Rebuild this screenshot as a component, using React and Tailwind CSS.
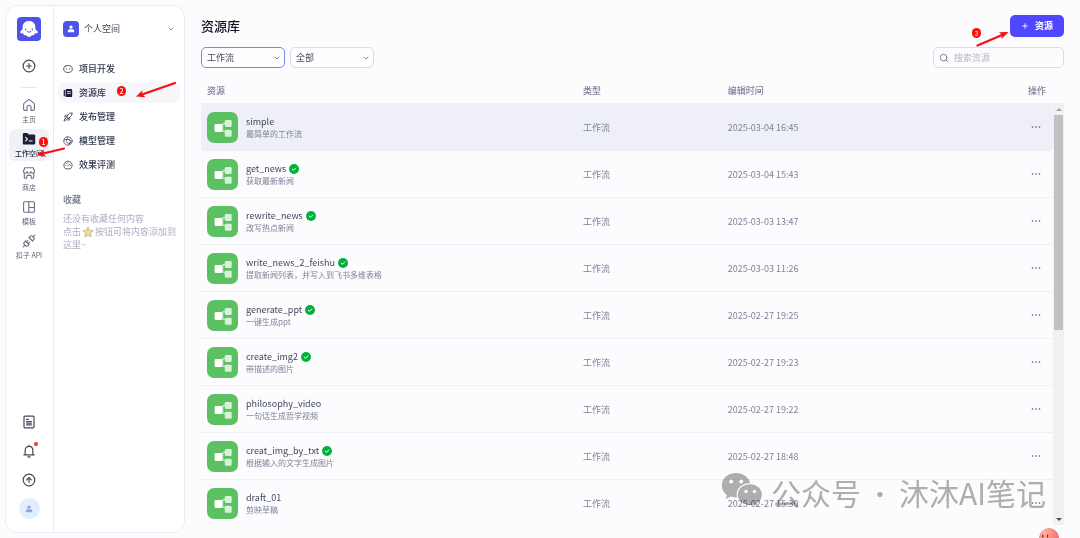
import React, { useState } from 'react';
import { ChevronDown, CirclePlus, CircleArrowUp, Plus, Rocket, Search, Unplug } from 'lucide-react';

const resources = [
  { name: 'simple', desc: '最简单的工作流', time: '2025-03-04 16:45', published: false },
  { name: 'get_news', desc: '获取最新新闻', time: '2025-03-04 15:43', published: true },
  { name: 'rewrite_news', desc: '改写热点新闻', time: '2025-03-03 13:47', published: true },
  { name: 'write_news_2_feishu', desc: '提取新闻列表，并写入到飞书多维表格', time: '2025-03-03 11:26', published: true },
  { name: 'generate_ppt', desc: '一键生成ppt', time: '2025-02-27 19:25', published: true },
  { name: 'create_img2', desc: '带描述的图片', time: '2025-02-27 19:23', published: true },
  { name: 'philosophy_video', desc: '一句话生成哲学视频', time: '2025-02-27 19:22', published: false },
  { name: 'creat_img_by_txt', desc: '根据输入的文字生成图片', time: '2025-02-27 18:48', published: true },
  { name: 'draft_01', desc: '剪映草稿', time: '2025-02-27 15:30', published: false },
];

const railItems = [
  { label: '主页', icon: HomeIcon },
  { label: '工作空间', icon: WorkspaceIcon, active: true },
  { label: '商店', icon: StoreIcon },
  { label: '模板', icon: TemplateIcon },
  { label: '扣子 API', icon: ApiIcon },
];

const menuItems = [
  { label: '项目开发', icon: BotIcon },
  { label: '资源库', icon: LibraryIcon, active: true },
  { label: '发布管理', icon: RocketIcon },
  { label: '模型管理', icon: ModelIcon },
  { label: '效果评测', icon: GaugeIcon },
];

/* ── Icons ── */

function HomeIcon() {
  return (
    <svg viewBox="0 0 14 14" className="w-3.5 h-3.5" fill="none" stroke="#6b7086" strokeWidth="1.1" strokeLinejoin="round" strokeLinecap="round" aria-hidden>
      <path d="M5 12.400H3c-.8 0-1.400-.6-1.400-1.400V6.300c0-.5.2-.9.600-1.200l4-3.200c.5-.4 1.100-.4 1.600 0l4 3.200c.4.3.6.7.6 1.200V11c0 .8-.6 1.400-1.400 1.400H9V9.300c0-1.100-.9-2-2-2s-2 .9-2 2z" />
    </svg>
  );
}

function ApiIcon() {
  return <Unplug className="w-3.5 h-3.5 text-[#6b7086]" strokeWidth={2} aria-hidden />;
}

function RocketIcon() {
  return <Rocket className="w-2.5 h-2.5" strokeWidth={2} aria-hidden />;
}

function WorkspaceIcon() {
  return (
    <svg viewBox="0 0 14 14" className="w-3.5 h-3.5" aria-hidden>
      <path d="M.8 2.4C.8 1.5 1.4 1 2.2 1h2.6c.5 0 .8.2 1.1.5l.9.9h5c.9 0 1.4.6 1.4 1.4v7.4c0 .9-.6 1.4-1.4 1.4H2.2c-.9 0-1.4-.6-1.4-1.4z" fill="#1c2035" />
      <path d="M3.6 5.3l2 1.8-2 1.8M7.3 9h2.9" fill="none" stroke="#fff" strokeWidth="1.1" strokeLinecap="round" strokeLinejoin="round" />
    </svg>
  );
}

function StoreIcon() {
  return (
    <svg viewBox="0 0 14 14" className="w-3.5 h-3.5" fill="none" stroke="#6b7086" strokeWidth="1.1" strokeLinejoin="round" strokeLinecap="round" aria-hidden>
      <path d="M2.8 1.8h8.4L12.5 5c0 1.5-.8 2.2-1.8 2.2S8.900 6.500 8.900 5.400c0 1.100-.9 1.800-1.900 1.800s-1.900-.7-1.900-1.800c0 1.100-.8 1.800-1.800 1.800S1.500 6.500 1.500 5z" />
      <path d="M2.300 7.600v3.600c0 .6.4 1 1 1h1.400v-1.600c0-.7.5-1.200 1.200-1.200h2.200c.7 0 1.200.5 1.200 1.200v1.600h1.400c.6 0 1-.4 1-1V7.600" />
    </svg>
  );
}

function TemplateIcon() {
  return (
    <svg viewBox="0 0 14 14" className="w-3.5 h-3.5" fill="none" stroke="#6b7086" strokeWidth="1.1" aria-hidden>
      <rect x="1.600" y="1.800" width="10.800" height="10.400" rx="1" />
      <path d="M6.800 1.800v10.400M6.800 7.500h5.600" />
    </svg>
  );
}

function BotIcon() {
  return (
    <svg viewBox="0 0 10 10" className="w-2.5 h-2.5" fill="none" stroke="#30364f" strokeWidth=".8" strokeLinecap="round" aria-hidden>
      <path d="M2.800 1.900c1.400-.5 3-.5 4.400 0C8.700 2.300 9.300 3.400 9.300 5S8.700 7.700 7.200 8.100c-1.400.5-3 .5-4.400 0C1.300 7.700.7 6.600.7 5s.6-2.700 2.100-3.100z" />
      <path d="M3.300 4.700v.6M6.700 4.700v.6" />
    </svg>
  );
}

function LibraryIcon() {
  return (
    <svg viewBox="0 0 10 10" className="w-2.5 h-2.5" aria-hidden>
      <path d="M.7 1.900h1.200v6.400H.7z" fill="#1c2035" />
      <rect x="2.500" y=".9" width="6.700" height="8.200" rx="1.200" fill="#1c2035" />
      <path d="M4.500 3.600h2.900M4.500 5.400h2.900" stroke="#fff" strokeWidth=".8" strokeLinecap="round" />
    </svg>
  );
}

function ModelIcon() {
  return (
    <svg viewBox="0 0 10 10" className="w-2.5 h-2.5" fill="none" stroke="#30364f" strokeWidth=".7" strokeLinecap="round" aria-hidden>
      <circle cx="5" cy="5" r="4.200" />
      <path d="M1 3.900c2-.9 4.300-.9 6.300.5M4.200 1c-.4 1 .3 2.200 3.100 3.400.3 1.600-.4 3.300-1.900 4.500M3.300 3.400c-.3 1.500 0 2.700.8 3.500 1.200.6 2.700.5 4.200-.3" />
    </svg>
  );
}

function GaugeIcon() {
  return (
    <svg viewBox="0 0 10 10" className="w-2.5 h-2.5" fill="none" stroke="#30364f" strokeWidth=".8" strokeLinecap="round" aria-hidden>
      <path d="M2.300 8.600a4.200 4.200 0 1 1 5.400 0z" strokeLinejoin="round" />
      <path d="M4.900 5.900l1.600-1.700M2.700 5.300h.1M3.400 3.500h.1M5 2.900h.1M7.300 5.300h.1" />
    </svg>
  );
}

function LogoIcon() {
  return (
    <svg viewBox="0 0 24 24" className="w-6 h-6" aria-hidden>
      <rect width="24" height="24" rx="4" fill="#4d53e8" />
      <path d="M12 4c-3.900 0-6.400 2.700-6.400 6.300v2.200c-.9.400-2 1.300-2.300 2.300-.3 1 .2 1.700 1.100 1.500.7-.1 1.300-.1 1.700.2.300 1.500 1.700 2.200 3 1.600.8 1.400 1.800 1.900 2.900 1.900s2.100-.5 2.900-1.900c1.300.6 2.700-.1 3-1.600.4-.3 1-.3 1.700-.2.900.2 1.400-.5 1.100-1.500-.3-1-1.400-1.900-2.300-2.300v-2.200C18.400 6.700 15.900 4 12 4z" fill="#fff" />
      <path d="M8.700 12v1.200M15.300 12v1.200M10.200 14.500c1.100 1 2.500 1 3.600 0" fill="none" stroke="#4d53e8" strokeWidth="1" strokeLinecap="round" />
    </svg>
  );
}

function PersonIcon({ className }) {
  return (
    <svg viewBox="0 0 8 8" className={className} fill="currentColor" aria-hidden>
      <circle cx="4" cy="2.100" r="1.700" />
      <path d="M.8 7.300V6c0-1 .7-1.700 1.700-1.700h3C6.500 4.300 7.200 5 7.200 6v1.300z" />
    </svg>
  );
}

function DocIcon() {
  return (
    <svg viewBox="0 0 14 14" className="w-3.5 h-3.5" fill="none" stroke="#41465c" strokeWidth="1.200" strokeLinecap="round" aria-hidden>
      <rect x="2" y="1.200" width="10" height="11.600" rx="1" />
      <path d="M4.600 4.400h1.800M4.600 6.500h4.800M4.600 8.100h4.800M4.600 9.900h4.800" />
    </svg>
  );
}

function BellIcon() {
  return (
    <svg viewBox="0 0 14 14" className="w-3.5 h-3.5" fill="none" stroke="#41465c" strokeWidth="1.200" strokeLinecap="round" strokeLinejoin="round" aria-hidden>
      <path d="M1.800 10.800h10.400M3.200 10.800V6.200C3.200 3.900 4.800 2.300 7 2.300s3.800 1.600 3.800 3.900v4.600M7 1.200v1M5.900 12.900h2.200" />
    </svg>
  );
}

function WorkflowIcon() {
  return (
    <svg viewBox="0 0 31 31" className="w-[31px] h-[31px] shrink-0" aria-hidden>
      <rect width="31" height="31" rx="7" fill="#5bc163" />
      <path d="M13 15.500h2.500M18 11.500h-.8c-1 0-1.700.7-1.700 1.700v4.600c0 1 .7 1.700 1.700 1.700h.8" fill="none" stroke="#c5eac8" strokeWidth="1.500" />
      <rect x="17.800" y="8" width="6.900" height="7" rx="1.300" fill="#d8f1da" />
      <rect x="17.800" y="17.700" width="6.900" height="7" rx="1.300" fill="#d8f1da" />
      <rect x="7.600" y="12" width="7.600" height="8" rx="1.300" fill="#fff" />
    </svg>
  );
}

function PublishedIcon() {
  return (
    <svg viewBox="0 0 10 10" className="w-2.5 h-2.5" role="img" aria-label="已发布">
      <circle cx="5" cy="5" r="5" fill="#00b23c" />
      <path d="M3.200 5.100l1.300 1.200L6.800 4" fill="none" stroke="#fff" strokeWidth="1" strokeLinecap="round" strokeLinejoin="round" />
    </svg>
  );
}

function StarIcon() {
  return (
    <svg viewBox="0 0 12 12" className="inline w-3 h-3 mx-px align-[-3px]" aria-hidden>
      <path d="M6 .9l1.500 3.400 3.700.4-2.800 2.500.8 3.700L6 9l-3.200 1.900.8-3.700L.8 4.700l3.700-.4z" fill="#f8dc8c" stroke="#b3a984" strokeWidth=".7" strokeLinejoin="round" />
    </svg>
  );
}

function WechatIcon() {
  return (
    <svg viewBox="0 0 42 36" className="w-[42px] h-9" aria-hidden>
      <path d="M15 1C7 1 .8 6.500.8 13.400c0 3.900 2 7.300 5.200 9.500l-1.300 4.200 4.900-2.500c1.700.5 3.500.8 5.400.8 8 0 14.400-5.200 14.400-12S23 1 15 1z" fill="#b0b0af" />
      <path d="M29 11.600c-7.200 0-12.800 4.900-12.800 11S21.800 33.700 29 33.700c1.600 0 3.100-.2 4.500-.7l4.100 2.200-1.100-3.600c3-2 4.900-5.200 4.900-8.900 0-6.200-5.400-11.100-12.400-11.100z" fill="#b0b0af" stroke="#fff" strokeWidth="1.200" />
      <g fill="#fff">
        <circle cx="10.200" cy="9.500" r="2" />
        <circle cx="20.200" cy="9.500" r="2" />
        <circle cx="25" cy="19.500" r="1.700" />
        <circle cx="33.500" cy="19.500" r="1.700" />
      </g>
    </svg>
  );
}

/* ── Step markers ── */

function StepBadge({ children, className }) {
  return (
    <span className={`absolute w-[9px] h-2.5 rounded-full bg-[#fb0f0c] text-white text-[7px] leading-[10px] text-center ${className}`}>
      {children}
    </span>
  );
}

function LongArrow({ className }) {
  return (
    <svg viewBox="0 0 40 17" className={`absolute w-10 h-[17px] pointer-events-none ${className}`} aria-hidden>
      <path d="M39 2L6 13.500" stroke="#fb0f0c" strokeWidth="2.200" strokeLinecap="round" />
      <path d="M0 15.500L6.500 9.200 6 13l3.500 3.300z" fill="#fb0f0c" />
    </svg>
  );
}

/* ── Page parts ── */

function Rail() {
  return (
    <nav className="w-12 shrink-0 flex flex-col items-center pt-[11px] pr-px pb-[13px] border-r border-[#ebebf3]" aria-label="主导航">
      <a href="#home" aria-label="首页"><LogoIcon /></a>
      <button type="button" className="mt-[18px] text-[#41465c]" aria-label="新建">
        <CirclePlus className="w-3.5 h-3.5" strokeWidth={2} />
      </button>
      <hr className="mt-3.5 mb-[7px] w-4 border-[#e6e6ee]" />
      <div className="flex flex-col gap-0.5">
        {railItems.map(({ label, icon: Icon, active }) => (
          <a
            key={label}
            href={`#${label}`}
            className={`relative flex flex-col items-center justify-center gap-0.5 w-10 h-8 rounded-md text-[7px] leading-[10px] whitespace-nowrap ${
              active ? 'bg-[#f0f0f7] text-[#1c2035] font-medium' : 'text-[#5d6278]'
            }`}
          >
            <Icon />
            {label}
            {active && (
              <>
                <StepBadge className="left-[30px] top-2">1</StepBadge>
                <svg viewBox="0 0 28 11" className="absolute left-7 top-[18px] w-7 h-[11px] z-10" aria-hidden>
                  <path d="M27 1.500L5 6.800" stroke="#fb0f0c" strokeWidth="2.200" strokeLinecap="round" />
                  <path d="M0 8L7 2.500 6.500 6.400 9 9.800z" fill="#fb0f0c" />
                </svg>
              </>
            )}
          </a>
        ))}
      </div>
      <div className="mt-auto flex flex-col items-center gap-[15px] text-[#41465c]">
        <button type="button" aria-label="文档"><DocIcon /></button>
        <button type="button" className="relative" aria-label="通知">
          <BellIcon />
          <span className="absolute -right-0.5 -top-0.5 w-1 h-1 rounded-full bg-[#f0323c]" />
        </button>
        <button type="button" aria-label="上传"><CircleArrowUp className="w-3.5 h-3.5" strokeWidth={2} /></button>
      </div>
      <button type="button" className="mt-[11px] w-[21px] h-[21px] shrink-0 rounded-full bg-[#dfefff] text-[#93a5cc] flex items-center justify-center" aria-label="账号">
        <PersonIcon className="w-2 h-2" />
      </button>
    </nav>
  );
}

function SpaceMenu() {
  return (
    <div className="flex-1 min-w-0 px-1 pt-[15px]">
      <button type="button" className="flex items-center w-full h-4 px-[5px] text-[9px] text-[#41465c]">
        <span className="w-4 h-4 rounded bg-[#4d53e8] text-white flex items-center justify-center">
          <PersonIcon className="w-2 h-2" />
        </span>
        <span className="ml-[5px]">个人空间</span>
        <ChevronDown className="ml-auto w-2 h-2 text-[#6b7086]" strokeWidth={2.5} aria-hidden />
      </button>
      <nav className="mt-[21px] flex flex-col gap-[3px]" aria-label="空间菜单">
        {menuItems.map(({ label, icon: Icon, active }) => (
          <a
            key={label}
            href={`#${label}`}
            className={`relative flex items-center gap-1.5 h-[21px] px-[5px] rounded-md text-[9px] font-medium text-[#30364f] ${active ? 'bg-[#f6f6fb]' : ''}`}
          >
            <Icon />
            {label}
            {active && (
              <>
                <StepBadge className="left-[59px] top-1">2</StepBadge>
                <LongArrow className="right-1 -top-px" />
              </>
            )}
          </a>
        ))}
      </nav>
      <section className="mt-[18px] pl-[5px] text-[9px] leading-[13px]">
        <h2 className="font-medium text-[#6b7086]">收藏</h2>
        <p className="mt-1.5 text-[#abb0c0]">
          还没有收藏任何内容<br />
          点击<StarIcon />按钮可将内容添加到这里~
        </p>
      </section>
    </div>
  );
}

function Dropdown({ label, options, className }) {
  return (
    <div className="relative flex w-[84px]">
      <select
        aria-label={label}
        className={`appearance-none w-full h-[21px] pl-[5px] pr-4 rounded-[5px] border bg-white/60 text-[9px] leading-[13px] text-[#41465c] outline-none ${className}`}
      >
        {options.map((o) => <option key={o}>{o}</option>)}
      </select>
      <ChevronDown className="absolute right-1 top-[7px] w-2 h-2 text-[#6b7086] pointer-events-none" strokeWidth={2.5} aria-hidden />
    </div>
  );
}

function ResourceTable() {
  return (
    <table className="w-full table-fixed border-separate border-spacing-0 text-left text-[9px] leading-[13px] text-[#7d8296]">
      <thead>
        <tr className="h-[26px] [&>th]:border-b [&>th]:border-[#ededf4] [&>th]:font-medium">
          <th className="w-[44%] pl-1.5">资源</th>
          <th className="w-[17%] pl-[7px]">类型</th>
          <th className="pl-[7px]">编辑时间</th>
          <th className="w-8 pl-[7px] whitespace-nowrap">操作</th>
        </tr>
      </thead>
      <tbody>
        {resources.map((r, i) => (
          <tr
            key={r.name}
            className={`h-[47px] [&>td]:border-b [&>td]:border-[#eeeef5] ${
              i === 0 ? '[&>td]:bg-[#efeff8] [&>td:first-child]:rounded-l [&>td:last-child]:rounded-r' : ''
            }`}
          >
            <td className="pl-1.5">
              <div className="flex items-center gap-2">
                <WorkflowIcon />
                <div className="min-w-0 pt-0.5">
                  <div className="flex items-center gap-[3px] text-[9px] leading-3 text-[#41465c]">
                    {r.name}
                    {r.published && <PublishedIcon />}
                  </div>
                  <div className="text-[8px] leading-3 truncate">{r.desc}</div>
                </div>
              </div>
            </td>
            <td className="pl-[7px]">工作流</td>
            <td className="pl-[7px]">{r.time}</td>
            <td className="pl-[7px]">
              <button type="button" className="flex items-center justify-center w-4 h-3.5" aria-label={`${r.name} 更多操作`}>
                <svg viewBox="0 0 10 2" className="w-2.5 h-0.5" fill="#4d5269" aria-hidden>
                  <circle cx="1.500" cy="1" r=".8" />
                  <circle cx="5" cy="1" r=".8" />
                  <circle cx="8.500" cy="1" r=".8" />
                </svg>
              </button>
            </td>
          </tr>
        ))}
      </tbody>
    </table>
  );
}

function ScrollTrack() {
  return (
    <div className="w-[11px] shrink-0 mt-[25px] px-px bg-[#f0f0f1] flex flex-col items-center" aria-hidden>
      <span className="h-3 flex items-center">
        <span className="border-x-3 border-b-3 border-x-transparent border-b-[#a3a3a3]" />
      </span>
      <span className="w-full h-[51%] bg-[#c1c1c1]" />
      <span className="mt-auto h-3 flex items-center">
        <span className="border-x-3 border-t-3 border-x-transparent border-t-[#505050]" />
      </span>
    </div>
  );
}

export default function App() {
  const [keyword, setKeyword] = useState('');

  return (
    <div className="relative flex h-screen overflow-hidden bg-[#fcfcff] p-[5px] font-['Noto_Sans_CJK_SC',sans-serif]">
      <aside className="flex w-[180px] shrink-0 rounded-xl border border-[#ebebf3] bg-white">
        <Rail />
        <SpaceMenu />
      </aside>

      <main className="flex-1 min-w-0 flex flex-col pl-4 pr-[11px] pt-2.5 pb-2">
        <header className="flex items-center justify-between h-[22px]">
          <h1 className="text-[13px] leading-5 font-medium text-[#0f1222]">资源库</h1>
          <button type="button" className="relative flex items-center justify-center gap-1.5 w-[54px] h-[22px] rounded-[5px] bg-[#5147ff] text-white text-[9px] font-bold">
            <Plus className="w-2 h-2" strokeWidth={2.5} aria-hidden />
            资源
            <StepBadge className="-left-[38px] top-[13px] font-normal">3</StepBadge>
            <svg viewBox="0 0 33 16" className="absolute -left-[34px] top-4 w-[33px] h-4" aria-hidden>
              <path d="M1.500 14.500L26 4" stroke="#fb0f0c" strokeWidth="2.200" strokeLinecap="round" />
              <path d="M32.500 1L23 1.300l3 2.700-.5 4z" fill="#fb0f0c" />
            </svg>
          </button>
        </header>

        <div className="mt-2.5 flex items-center gap-[5px]">
          <Dropdown label="资源类型" options={['工作流', '插件', '知识库']} className="border-[#7f84f0]" />
          <Dropdown label="范围" options={['全部', '由我创建']} className="border-[#dcdbe9]" />
          <label className="ml-auto flex items-center gap-[5px] w-[131px] h-[21px] px-[5px] rounded-[5px] border border-[#dcdbe9]">
            <Search className="w-2.5 h-2.5 shrink-0 text-[#6b7086]" strokeWidth={2} aria-hidden />
            <input
              type="search"
              aria-label="搜索资源"
              placeholder="搜索资源"
              value={keyword}
              onChange={(e) => setKeyword(e.target.value)}
              className="w-full min-w-0 bg-transparent text-[9px] leading-[13px] text-[#41465c] placeholder:text-[#b3b7c6] outline-none"
            />
          </label>
        </div>

        <div className="mt-2.5 flex-1 min-h-0 flex overflow-hidden">
          <div className="flex-1 min-w-0 overflow-hidden">
            <ResourceTable />
          </div>
          <ScrollTrack />
        </div>
      </main>

      {/* watermark over the last rows, multiplied so the table text stays readable */}
      <div className="absolute right-[34px] bottom-6 flex items-start gap-2 pointer-events-none mix-blend-multiply text-[#b0b0af]">
        <WechatIcon />
        <span className="text-[30px] leading-10 whitespace-nowrap">
          公众号 <span className="mx-2 font-['Noto_Sans'] font-bold">·</span> 沐沐AI笔记
        </span>
      </div>

      {/* floating assistant, half below the fold */}
      <svg viewBox="0 0 20 20" className="absolute right-[21px] -bottom-2.5 w-5 h-5" aria-hidden>
        <defs>
          <radialGradient id="peach" cx=".3" cy=".25" r=".9">
            <stop offset="0" stopColor="#ffb3a0" />
            <stop offset="1" stopColor="#f25a56" />
          </radialGradient>
        </defs>
        <circle cx="10" cy="10" r="10" fill="url(#peach)" />
        <path d="M3.800 7v2M8.600 7v2" stroke="#5d2a30" strokeWidth="1.200" strokeLinecap="round" />
      </svg>
    </div>
  );
}
